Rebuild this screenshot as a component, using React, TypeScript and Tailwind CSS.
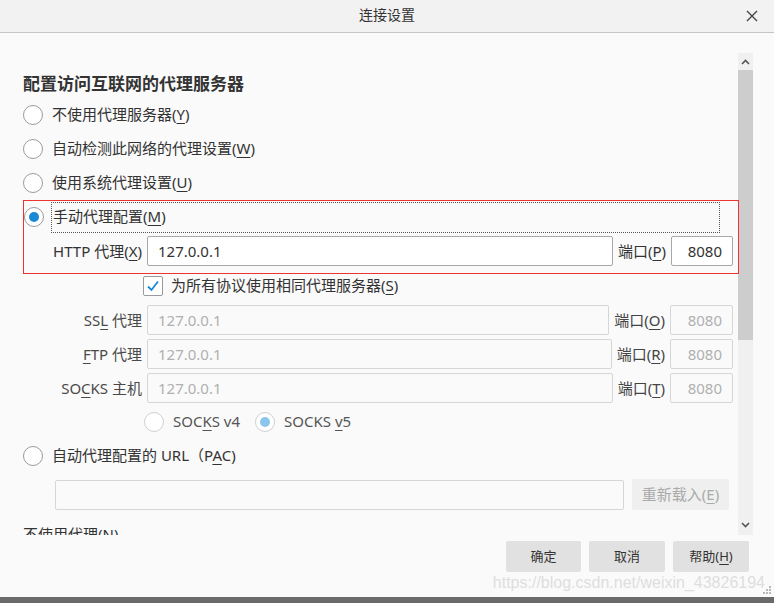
import type { ReactNode } from "react";

const Key = ({ children }: { children: ReactNode }) => (
  <u className="underline underline-offset-[3px]">{children}</u>
);

const Radio = ({ checked = false, disabled = false }: { checked?: boolean; disabled?: boolean }) => (
  <div
    className={`flex h-[20px] w-[20px] shrink-0 items-center justify-center rounded-full border bg-white ${
      disabled ? "border-[#d0d0d0]" : "border-[#9a9a9a]"
    }`}
  >
    {checked ? (
      <div className={`h-[10px] w-[10px] rounded-full ${disabled ? "bg-[#8cc6ec]" : "bg-[#1a88d4]"}`} />
    ) : null}
  </div>
);

const TextBox = ({
  value,
  disabled = false,
  className = "",
}: {
  value?: string;
  disabled?: boolean;
  className?: string;
}) => (
  <div
    className={`flex h-[30px] items-center rounded-[2px] border px-[10px] text-[15px] ${
      disabled ? "border-[#d6d6d6] bg-[#fafafa] text-[#b0b0b0]" : "border-[#a8a8a8] bg-white text-[#333]"
    } ${className}`}
  >
    {value}
  </div>
);

const ProxyRow = ({ label, portKey }: { label: ReactNode; portKey: string }) => (
  <div className="flex h-[34px] items-center">
    <div className="w-[119px] text-right text-[#4a4a4a]">{label}</div>
    <TextBox value="127.0.0.1" disabled className="ml-[5px] flex-1" />
    <div className="mx-[5px] text-[#444]">
      端口(<Key>{portKey}</Key>)
    </div>
    <TextBox value="8080" disabled className="w-[63px] justify-end" />
  </div>
);

const OptionRow = ({ label }: { label: ReactNode }) => (
  <div className="flex h-[34px] items-center gap-[9px]">
    <Radio />
    <span className="-mt-[2px]">{label}</span>
  </div>
);

export default function App() {
  return (
    <div className="relative flex h-[603px] w-[774px] flex-col overflow-hidden bg-[#fafafa] font-['Noto_Sans','Noto_Sans_CJK_SC',sans-serif] text-[15px] leading-[22px] text-[#333]">
      {/* title bar */}
      <div className="relative flex h-[33px] shrink-0 items-center justify-center border-b border-[#c6c6c6] bg-[#f2f2f2]">
        <span className="-mt-[2px] text-[14px] text-[#333]">连接设置</span>
        <svg className="absolute right-[16px] top-[10px]" width="12" height="12" viewBox="0 0 12 12">
          <path d="M1 1 L11 11 M11 1 L1 11" stroke="#444" strokeWidth="1.4" />
        </svg>
      </div>

      <div className="flex h-[502px] shrink-0">
        {/* content */}
        <div className="flex-1 overflow-x-visible overflow-y-clip pl-[23px] pr-[5px]">
          <div className="mt-[39px] h-[26px] text-[17px] font-bold leading-[24px] text-[#333]">
            配置访问互联网的代理服务器
          </div>
          <OptionRow label={<>不使用代理服务器(<Key>Y</Key>)</>} />
          <OptionRow label={<>自动检测此网络的代理设置(<Key>W</Key>)</>} />
          <OptionRow label={<>使用系统代理设置(<Key>U</Key>)</>} />

          <div className="relative pb-[8px] pt-[1px]">
            <div className="pointer-events-none absolute inset-y-0 left-0 right-[-6px] z-10 border border-[#ee3333]" />
            <div className="flex h-[32px] items-center">
              <div className="ml-[1px]">
                <Radio checked />
              </div>
              <div className="ml-[7px] mr-[13px] flex h-[31px] flex-1 items-center border border-dotted border-[#555] pb-[2px] pl-px">
                手动代理配置(<Key>M</Key>)
              </div>
            </div>
            <div className="mt-[3px] flex h-[30px] items-center">
              <div className="-ml-[2px] w-[121px] text-right">
                HTTP 代理(<Key>X</Key>)
              </div>
              <TextBox value="127.0.0.1" className="ml-[5px] flex-1" />
              <div className="mx-[5px]">
                端口(<Key>P</Key>)
              </div>
              <TextBox value="8080" className="w-[62px] justify-end" />
            </div>
          </div>

          <div className="mb-[5px] flex h-[24px] items-center pl-[120px]">
            <div className="flex h-[20px] w-[20px] items-center justify-center rounded-[2px] border border-[#9a9a9a] bg-white">
              <svg width="14" height="14" viewBox="0 0 14 14">
                <path d="M2 7.5 L5.5 11 L12 2.5" fill="none" stroke="#1a88d4" strokeWidth="1.8" />
              </svg>
            </div>
            <span className="-mt-[2px] ml-[8px]">
              为所有协议使用相同代理服务器(<Key>S</Key>)
            </span>
          </div>

          <ProxyRow label={<>SS<Key>L</Key> 代理</>} portKey="O" />
          <ProxyRow label={<><Key>F</Key>TP 代理</>} portKey="R" />
          <ProxyRow label={<>SO<Key>C</Key>KS 主机</>} portKey="T" />

          <div className="flex h-[34px] items-center pl-[121px] text-[#555]">
            <Radio disabled />
            <span className="-mt-[2px] ml-[9px]">
              SOC<Key>K</Key>S v4
            </span>
            <div className="ml-[15px]">
              <Radio checked disabled />
            </div>
            <span className="-mt-[2px] ml-[9px]">
              SOCKS <Key>v</Key>5
            </span>
          </div>

          <OptionRow label={<>自动代理配置的 URL（P<Key>A</Key>C)</>} />

          <div className="mt-[6px] flex items-center pl-[32px]">
            <TextBox disabled className="w-[569px]" />
            <div className="ml-[8px] flex h-[31px] w-[97px] items-center justify-center rounded-[2px] bg-[#efefef] pb-[2px] text-[#aaa]">
              重新载入(<Key>E</Key>)
            </div>
          </div>

          <div className="mt-[13px]">
            不使用代理(<Key>N</Key>)
          </div>
        </div>

        {/* scrollbar */}
        <div className="mr-[21px] mt-[20px] flex w-[15px] flex-col bg-[#f0f0f0]">
          <div className="flex h-[17px] items-center justify-center">
            <svg width="9" height="6" viewBox="0 0 9 6">
              <path d="M1 5 L4.5 1.5 L8 5" fill="none" stroke="#555" strokeWidth="1.6" />
            </svg>
          </div>
          <div className="h-[270px] bg-[#cdcdcd]" />
          <div className="flex-1" />
          <div className="flex h-[17px] items-center justify-center pb-[4px]">
            <svg width="9" height="6" viewBox="0 0 9 6">
              <path d="M1 1 L4.5 4.5 L8 1" fill="none" stroke="#555" strokeWidth="1.6" />
            </svg>
          </div>
        </div>
      </div>

      {/* footer buttons */}
      <div className="flex flex-1 justify-end gap-[8px] pr-[25px] pt-[6px] text-[13px]">
        <div className="flex h-[31px] w-[75px] items-center justify-center rounded-[2px] bg-[#e1e1e1] pb-[2px]">确定</div>
        <div className="flex h-[31px] w-[76px] items-center justify-center rounded-[2px] bg-[#e1e1e1] pb-[2px]">取消</div>
        <div className="flex h-[31px] w-[76px] items-center justify-center rounded-[2px] bg-[#e1e1e1] pb-[2px]">
          帮助(<Key>H</Key>)
        </div>
      </div>

      <div className="pointer-events-none absolute bottom-[10px] right-[9px] font-['Liberation_Sans',sans-serif] text-[16px] leading-[20px] text-[#dedede]">
        https://blog.csdn.net/weixin_43826194
      </div>
      <svg className="absolute bottom-[8px] right-[2px]" width="10" height="10" viewBox="0 0 10 10">
        <rect x="7" y="1" width="2" height="2" fill="#b8b8b8" />
        <rect x="4" y="4" width="2" height="2" fill="#b8b8b8" />
        <rect x="7" y="4" width="2" height="2" fill="#b8b8b8" />
        <rect x="1" y="7" width="2" height="2" fill="#b8b8b8" />
        <rect x="4" y="7" width="2" height="2" fill="#b8b8b8" />
        <rect x="7" y="7" width="2" height="2" fill="#b8b8b8" />
      </svg>

      <div className="h-[6px] shrink-0 bg-[#6a6a6a]" />
    </div>
  );
}
